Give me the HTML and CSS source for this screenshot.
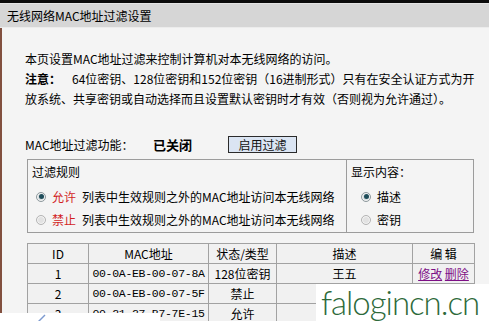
FILE: index.html
```html
<!DOCTYPE html>
<html lang="zh-CN">
<head>
  <meta charset="UTF-8">
  <title>无线网络MAC地址过滤设置</title>
  <link rel="stylesheet" href="styles.css">
</head>
<body>
  <div class="topbar"></div>
  <div class="titlebar">无线网络MAC地址过滤设置</div>
  <div class="page">
    <p>本页设置MAC地址过滤来控制计算机对本无线网络的访问。</p>
    <p><b>注意：</b><span class="gap">64位密钥、128位密钥和152位密钥（16进制形式）只有在安全认证方式为开</span><br>放系统、共享密钥或自动选择而且设置默认密钥时才有效（否则视为允许通过）。</p>

    <div class="status-row">
      <span class="label">MAC地址过滤功能：</span>
      <span class="state">已关闭</span>
      <button class="btn">启用过滤</button>
    </div>

    <div class="boxes">
      <div class="box rules">
        <div class="box-title">过滤规则</div>
        <div class="opt first"><span class="radio on"></span><span class="red">允许</span>列表中生效规则之外的MAC地址访问本无线网络</div>
        <div class="opt"><span class="radio"></span><span class="red">禁止</span>列表中生效规则之外的MAC地址访问本无线网络</div>
      </div>
      <div class="box show">
        <div class="box-title">显示内容：</div>
        <div class="opt first"><span class="radio on"></span>描述</div>
        <div class="opt"><span class="radio"></span>密钥</div>
      </div>
    </div>

    <table class="list">
      <colgroup>
        <col style="width:61px"><col style="width:120px"><col style="width:68px"><col style="width:136px"><col style="width:62px">
      </colgroup>
      <tr><th>ID</th><th>MAC地址</th><th>状态/类型</th><th>描述</th><th>编 辑</th></tr>
      <tr><td>1</td><td class="mac">00-0A-EB-00-07-8A</td><td>128位密钥</td><td>王五</td><td><a href="#">修改</a> <a href="#">删除</a></td></tr>
      <tr><td>2</td><td class="mac">00-0A-EB-00-07-5F</td><td>禁止</td><td></td><td></td></tr>
      <tr><td>3</td><td class="mac">00-21-27-B7-7E-15</td><td>允许</td><td></td><td></td></tr>
    </table>
  </div>

  <!-- paper edge + watermark laid over the bottom -->
  <div class="cover-left">
    <svg width="160" height="12" viewBox="0 0 160 12"><path d="M37 10 L45 2" stroke="#7d9ad0" stroke-width="1.5" fill="none"/></svg>
  </div>
  <div class="cover-bottom"></div>
  <div class="watermark">falogincn.cn</div>
</body>
</html>
```

FILE: styles.css
```css
body {
  margin: 0;
  width: 489px;
  height: 325px;
  overflow: hidden;
  position: relative;
  background: #f4f4f4;
  font-family: "Noto Sans CJK SC", sans-serif;
  font-size: 12px;
  color: #000;
}
.topbar {
  height: 3px;
  background: #0b0b0b;
}
.titlebar {
  height: 23px;
  line-height: 23px;
  padding-left: 7px;
  background: #d6d6d6;
  border-top: 1px solid #e4e4e4;
  border-bottom: 1px solid #ececec;
}
.page {
  border-left: 2px solid #82503f;
  padding: 21px 0 0 23px;
  height: 276px;
  overflow: hidden;
}
p {
  margin: 0;
  line-height: 20px;
}
.gap {
  margin-left: 11px;
}
.status-row {
  display: flex;
  align-items: center;
  height: 20px;
  margin-top: 25px;
}
.label {
  width: 128px;
}
.state {
  width: 75px;
  font-weight: bold;
  font-size: 13px;
}
.btn {
  width: 69px;
  height: 17px;
  padding: 0;
  border: 1px solid #2b2b2b;
  background: #dbe5f3;
  font-family: inherit;
  font-size: 12px;
  line-height: 15px;
  color: #111;
}
.boxes {
  display: flex;
  margin: 5px 0 0 2px;
  width: 447px;
}
.box {
  height: 74px;
  box-sizing: border-box;
  border: 1px solid #9c9c9c;
}
.rules {
  width: 320px;
}
.show {
  width: 127px;
  border-left: none;
}
.box-title {
  padding: 2px 0 0 4px;
  line-height: 20px;
}
.opt {
  display: flex;
  align-items: center;
  height: 23px;
  padding-left: 8px;
}
.opt.first {
  margin-top: 3px;
}
.show .opt {
  padding-left: 14px;
}
.radio {
  width: 8px;
  height: 8px;
  border-radius: 50%;
  border: 1px solid #b4b4b4;
  background: #e2e2e2;
  box-shadow: inset 0 0 0 1px #f4f4f4;
  margin-right: 6px;
  position: relative;
}
.radio.on {
  border-color: #8f9a9e;
  background: #d6dcde;
}
.radio.on::after {
  content: "";
  position: absolute;
  left: 1.5px;
  top: 1.5px;
  width: 5px;
  height: 5px;
  border-radius: 50%;
  background: #1f4d5a;
}
.red {
  color: #d21f1f;
  margin-right: 6px;
}
.list {
  margin: 10px 0 0 2px;
  width: 447px;
  border-collapse: collapse;
  table-layout: fixed;
  background: #f1f1f1;
}
.list th, .list td {
  height: 19px;
  padding: 0;
  border: 1px solid #a2a2a2;
  text-align: center;
  font-weight: normal;
  line-height: 18px;
  white-space: nowrap;
}
.mac {
  font-family: "Liberation Mono", monospace;
  font-size: 11.5px;
  letter-spacing: -0.3px;
}
.list a {
  color: #7d0f86;
}
.cover-left {
  position: absolute;
  left: 0;
  top: 313px;
  width: 160px;
  height: 12px;
  background: #fff;
}
.cover-left svg {
  display: block;
}
.cover-bottom {
  position: absolute;
  left: 0;
  top: 321px;
  width: 489px;
  height: 4px;
  background: #fff;
}
.watermark {
  position: absolute;
  left: 316px;
  top: 284px;
  width: 173px;
  height: 41px;
  box-sizing: border-box;
  padding-left: 5px;
  background: #fff;
  font-family: Lato, sans-serif;
  font-weight: 300;
  font-size: 33px;
  line-height: 36px;
  letter-spacing: -1px;
  color: #2d6a3a;
  white-space: nowrap;
}
```
